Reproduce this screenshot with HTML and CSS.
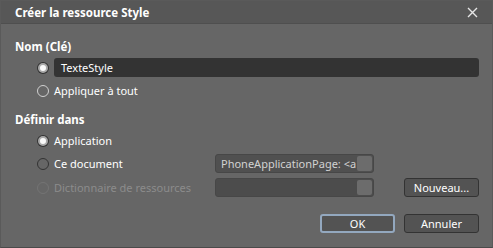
FILE: index.html
```html
<!DOCTYPE html>
<html lang="fr">
<head>
  <meta charset="UTF-8">
  <title>Créer la ressource Style</title>
  <link rel="stylesheet" href="styles.css">
</head>
<body>

<div class="dialog">
  <div class="titlebar">
    <span class="title">Créer la ressource Style</span>
    <svg class="close" width="11" height="11" viewBox="0 0 11 11">
      <path d="M1 1 L10 10 M10 1 L1 10" stroke="#e6e6e6" stroke-width="1.4" fill="none"/>
    </svg>
  </div>

  <div class="content">
    <div class="group-label">Nom (Clé)</div>
    <div class="row first">
      <span class="radio checked"></span>
      <div class="textbox">TexteStyle</div>
    </div>
    <div class="row">
      <span class="radio hover"></span>
      <span class="label">Appliquer à tout</span>
    </div>

    <div class="group-label second">Définir dans</div>
    <div class="grid">
      <div class="opt">
        <span class="radio checked"></span>
        <span class="label">Application</span>
      </div>
      <div></div>
      <div></div>

      <div class="opt">
        <span class="radio"></span>
        <span class="label">Ce document</span>
      </div>
      <div class="combo">
        <span class="combo-text">PhoneApplicationPage: &lt;a</span>
        <span class="combo-btn"></span>
      </div>
      <div></div>

      <div class="opt disabled">
        <span class="radio"></span>
        <span class="label">Dictionnaire de ressources</span>
      </div>
      <div class="combo disabled">
        <span class="combo-text"></span>
        <span class="combo-btn"></span>
      </div>
      <button class="btn new">Nouveau...</button>
    </div>

    <div class="actions">
      <button class="btn default">OK</button>
      <button class="btn">Annuler</button>
    </div>
  </div>
</div>

</body>
</html>
```

FILE: styles.css
```css
body {
  margin: 0;
  font-family: 'Noto Sans', 'Open Sans', sans-serif;
  font-size: 11px;
  color: #fff;
  background: #666;
}
.dialog {
  width: 493px;
  height: 248px;
  box-sizing: border-box;
  background: #666666;
  border: 1px solid #5a5a5a;
  border-bottom-color: #4a4a4a;
  display: flex;
  flex-direction: column;
}
.titlebar {
  height: 22px;
  background: #575757;
  border-bottom: 1px solid #4f4f4f;
  display: flex;
  align-items: center;
  justify-content: space-between;
  padding: 0 14px 0 14px;
}
.title {
  font-weight: bold;
  font-size: 11.5px;
}
.close {
  display: block;
}
.content {
  padding: 15px 13px 0 14px;
}
.group-label {
  font-weight: bold;
  font-size: 11.5px;
  line-height: 16px;
}
.group-label.second {
  margin-top: 13px;
}
.row {
  display: flex;
  align-items: center;
  gap: 5px;
  padding-left: 22px;
  margin-top: 6px;
  height: 16px;
}
.row.first {
  margin-top: 3px;
  height: 19px;
}
.label {
  line-height: 16px;
  white-space: nowrap;
}
.radio {
  width: 10px;
  height: 10px;
  border-radius: 50%;
  border: 1px solid #333;
  flex: none;
  box-sizing: content-box;
}
.radio.hover {
  border-color: #d0d0d0;
}
.radio.checked {
  width: 6px;
  height: 6px;
  background: #fafafa;
  border: 2px solid #a8a8a8;
  box-shadow: 0 0 0 1px #333;
  margin: 0 1px;
}
.textbox {
  flex: 1;
  height: 19px;
  line-height: 19px;
  background: #333;
  border-radius: 3px;
  padding-left: 7px;
}
.grid {
  display: grid;
  grid-template-columns: 178px 159px 1fr;
  row-gap: 5px;
  grid-template-rows: 16px 19px 19px;
  margin-top: 5px;
  padding-left: 22px;
}
.opt {
  display: flex;
  align-items: center;
  gap: 5px;
}
.opt.disabled .label {
  color: #8c8c8c;
}
.opt.disabled .radio {
  border-color: #747474;
}
.combo {
  display: flex;
  align-items: center;
  background: #505050;
  border: 1px solid #474747;
  border-radius: 3px;
  box-sizing: border-box;
  padding: 0 1px 0 5px;
}
.combo.disabled {
  background: #4c4c4c;
}
.combo-text {
  flex: 1;
  overflow: hidden;
  white-space: nowrap;
  color: #d2d2d2;
}
.combo-btn {
  width: 15px;
  height: 15px;
  background: #6c6c6c;
  border-radius: 2px;
  flex: none;
}
.btn {
  font-family: inherit;
  font-size: 11px;
  color: #fff;
  background: #535353;
  border: 1px solid #333;
  border-radius: 3px;
  height: 19px;
  padding: 0;
  box-sizing: border-box;
}
.btn.new {
  width: 75px;
  justify-self: end;
}
.actions {
  display: flex;
  justify-content: flex-end;
  gap: 9px;
  margin-top: 17px;
}
.actions .btn {
  width: 75px;
}
.btn.default {
  border: 2px solid #93a8bf;
}
```
